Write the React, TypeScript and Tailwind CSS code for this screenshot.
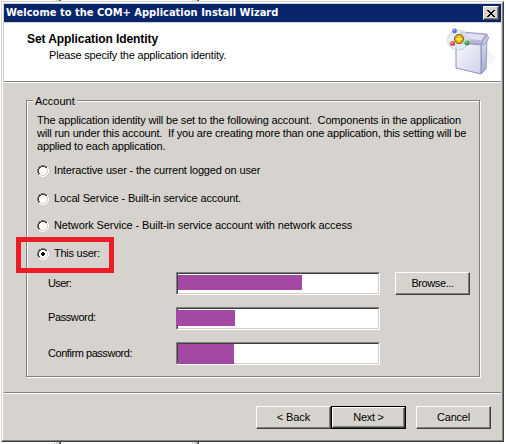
import React from "react";

const raised =
  "border border-t-white border-l-white border-r-[#404040] border-b-[#404040] shadow-[inset_-1px_-1px_0_#808080]";

function Line({ className = "", children }: { className?: string; children: React.ReactNode }) {
  return <div className={"whitespace-pre " + className}>{children}</div>;
}

function Radio({ checked = false, className, label }: { checked?: boolean; className: string; label: string }) {
  return (
    <div className="flex h-[13px] items-start">
      <svg className="mt-px mr-[5px] shrink-0" width="12" height="12" viewBox="0 0 12 12" shapeRendering="crispEdges">
        <path fill="#fff" d="M4 1h4v1h2v2h1v4h-1v2H8v1H4v-1H2V8H1V4h1V2h2z" />
        <path fill="#808080" d="M4 0h4v1H4zM2 1h2v1H2zM8 1h2v1H8zM1 2h1v2H1zM0 4h1v4H0zM1 8h1v2H1z" />
        <path fill="#404040" d="M4 1h4v1H4zM2 2h2v1H2zM8 2h2v1H8zM2 3h1v1H2zM1 4h1v4H1zM2 8h1v1H2z" />
        <path fill="#d4d0c8" d="M9 3h1v1H9zM10 4h1v4h-1zM9 8h1v1H9zM2 9h2v1H2zM8 9h2v1H8zM4 10h4v1H4z" />
        <path fill="#fff" d="M10 2h1v2h-1zM11 4h1v4h-1zM10 8h1v2h-1zM8 10h2v1H8zM4 11h4v1H4zM2 10h2v1H2z" />
        {checked && <path fill="#000" d="M5 4h2v1h1v2H7v1H5V7H4V5h1z" />}
      </svg>
      <Line className={className}>{label}</Line>
    </div>
  );
}

function Field({ children }: { children: React.ReactNode }) {
  return (
    <div className="h-[23px] w-[204px] shrink-0 border border-t-[#808080] border-l-[#808080] border-r-white border-b-white">
      <div className="h-full border border-t-[#404040] border-l-[#404040] border-r-[#d4d0c8] border-b-[#d4d0c8] bg-white">
        {children}
      </div>
    </div>
  );
}

function Button({ className, children }: { className: string; children: React.ReactNode }) {
  return (
    <button className={"flex h-[23px] w-[75px] justify-center whitespace-pre bg-[#d6d3ce] pt-[4px] " + className}>
      {children}
    </button>
  );
}

function WindowEdge({ className }: { className: string }) {
  return (
    <div className={"absolute flex w-[7px] " + className}>
      <div className="w-px bg-[#d6d3ce]" />
      <div className="w-px bg-white" />
      <div className="w-[3px] bg-[#d6d3ce]" />
      <div className="w-px bg-[#808080]" />
      <div className="w-px bg-[#404040]" />
    </div>
  );
}

function PackageIcon() {
  return (
    <svg className="mt-[4px] mr-[4px] ml-auto" width="50" height="50" viewBox="0 0 50 50">
      <defs>
        <linearGradient id="front" x1="0" y1="0" x2="1" y2="1">
          <stop offset="0" stopColor="#fafaff" />
          <stop offset="1" stopColor="#cfd0e8" />
        </linearGradient>
        <linearGradient id="side" x1="0" y1="0" x2="0" y2="1">
          <stop offset="0" stopColor="#dcdcf2" />
          <stop offset="1" stopColor="#a9a9d0" />
        </linearGradient>
      </defs>
      <path d="M40 21L49 31L35 46z" fill="#f5f4f4" />
      <path d="M10 15L14 5L40 7L35 17z" fill="#b9b8dc" stroke="#8f8fc0" strokeWidth=".8" />
      <path d="M17 6L38 8L34 13L20 12z" fill="#e3e2f3" />
      <path d="M34 18L39 10L40 12L39 42L34 47z" fill="url(#side)" stroke="#8888b8" strokeWidth=".8" />
      <path d="M9 15.500L34 18L34 47L9 41z" fill="url(#front)" stroke="#8585b8" strokeWidth=".9" />
      <path d="M34 17L40 7.500L42 11L37 18z" fill="#c5c4e5" stroke="#8b8bbd" strokeWidth=".7" />
      <ellipse cx="11.500" cy="13" rx="11" ry="10" fill="#dce4e9" fillOpacity=".65" stroke="#c2cad2" strokeWidth=".7" />
      <circle cx="12" cy="12" r="4.600" fill="#e0a900" stroke="#8b6500" />
      <path d="M12 9v6M9 12h6" stroke="#fff27a" strokeWidth="1.3" />
      <circle cx="7.500" cy="4" r="2.400" fill="#596bdd" />
      <circle cx="7" cy="3.300" r="1" fill="#b3bdff" />
      <circle cx="5.500" cy="16.500" r="2.500" fill="#cc4b57" />
      <circle cx="5" cy="15.800" r="1" fill="#ffadb2" />
      <circle cx="20" cy="16" r="2.500" fill="#329b3e" />
      <circle cx="19.400" cy="15.300" r="1" fill="#9ce69c" />
    </svg>
  );
}

export default function App() {
  return (
    <div className="relative h-[444px] w-[506px] overflow-hidden bg-white pt-px pl-px font-['Liberation_Sans',Arial,sans-serif] text-[11px] leading-[13px] text-black">
      <WindowEdge className="top-0 left-[54px] h-px" />
      <WindowEdge className="top-0 left-[192px] h-px" />
      <WindowEdge className="top-[442px] left-[54px] h-[2px]" />
      <WindowEdge className="top-[442px] left-[192px] h-[2px]" />
      <main className="h-[441px] w-[503px] border border-t-[#d6d3ce] border-l-[#d6d3ce] border-r-[#404040] border-b-[#404040]">
        <div className="flex h-full flex-col border border-t-white border-l-white border-r-[#808080] border-b-[#808080] bg-[#d6d3ce] p-px">
          <header className="flex h-[18px] shrink-0 items-start bg-[#08246b] pt-[2px] pr-[2px] pl-[2px] text-white">
            <Line className="font-['DejaVu_Sans_Condensed','DejaVu_Sans',sans-serif] font-bold tracking-[0.02px] [font-stretch:condensed]">
              Welcome to the COM+ Application Install Wizard
            </Line>
            <button className={"ml-auto flex h-[14px] w-[16px] items-center justify-center bg-[#d6d3ce] " + raised}>
              <svg width="8" height="7" viewBox="0 0 8 7" shapeRendering="crispEdges">
                <path d="M0 0h2v1h1v1h2V1h1V0h2v1H7v1H6v1H5v1h1v1h1v1h1v1H6V6H5V5H3v1H2v1H0V6h1V5h1V4h1V3H2V2H1V1H0z" />
              </svg>
            </button>
          </header>
          <section className="mt-px flex h-[60px] shrink-0 border-b border-white bg-white shadow-[inset_0_-1px_0_#808080]">
            <div className="pt-[10px] pl-[23px]">
              <Line className="text-[12px] leading-[13px] font-bold tracking-[-0.08px]">Set Application Identity</Line>
              <Line className="mt-[3px] pl-[22px] tracking-[-0.2px]">Please specify the application identity.</Line>
            </div>
            <PackageIcon />
          </section>
          <section className="mt-[17px] ml-[22px] h-[277px] w-[454px] shrink-0 border border-[#808080] shadow-[inset_1px_1px_0_white,1px_1px_0_white]">
            <div className="-mt-[6px] ml-[6px] w-[44px] bg-[#d6d3ce] pl-[2px]">Account</div>
            <div className="mt-[6px] ml-[10px]">
              <Line className="tracking-[-0.163px]">The application identity will be set to the following account.  Components in the application</Line>
              <Line className="tracking-[-0.178px]">will run under this account.  If you are creating more than one application, this setting will be</Line>
              <Line className="tracking-[-0.18px]">applied to each application.</Line>
            </div>
            <div className="mt-[11px] ml-[10px] flex flex-col">
              <Radio className="tracking-[-0.16px]" label="Interactive user - the current logged on user" />
              <div className="h-[15px]" />
              <Radio className="tracking-[-0.12px]" label="Local Service - Built-in service account." />
              <div className="h-[14px]" />
              <Radio className="tracking-[-0.1px]" label="Network Service - Built-in service account with network access" />
              <div className="h-[15px]" />
              <Radio checked className="tracking-[-0.25px]" label="This user:" />
            </div>
            <div className="mt-[12px] ml-[21px] flex">
              <Line className="w-[128px] pt-[5px] tracking-[-0.6px]">User:</Line>
              <Field><div className="mt-px h-[15px] w-[124px] bg-[#a349a4]" /></Field>
              <Button className={"ml-[15px] tracking-[-0.4px] " + raised}>Browse...</Button>
            </div>
            <div className="mt-[12px] ml-[21px] flex">
              <Line className="w-[128px] pt-[4px] tracking-[-0.4px]">Password:</Line>
              <Field><div className="mt-px -ml-[2px] h-[16px] w-[59px] bg-[#a349a4]" /></Field>
            </div>
            <div className="mt-[12px] ml-[21px] flex">
              <Line className="w-[128px] pt-[5px] tracking-[-0.45px]">Confirm password:</Line>
              <Field><div className="h-[20px] w-[56px] bg-[#a349a4]" /></Field>
            </div>
          </section>
          <hr className="mt-[15px] h-[2px] shrink-0 border-t border-b border-t-[#808080] border-b-white" />
          <footer className="mt-[12px] mr-[10px] flex justify-end">
            <Button className={"tracking-[-0.1px] " + raised}>{"< Back"}</Button>
            <div className="border border-black">
              <Button className={"!h-[21px] !w-[73px] !pt-[3px] tracking-[-0.3px] " + raised}>{"Next >"}</Button>
            </div>
            <Button className={"ml-[10px] tracking-[-0.2px] " + raised}>Cancel</Button>
          </footer>
        </div>
      </main>
      <div className="absolute top-[237px] left-[16px] h-[36px] w-[98px] border-[5px] border-[#ed1c24]" />
    </div>
  );
}
